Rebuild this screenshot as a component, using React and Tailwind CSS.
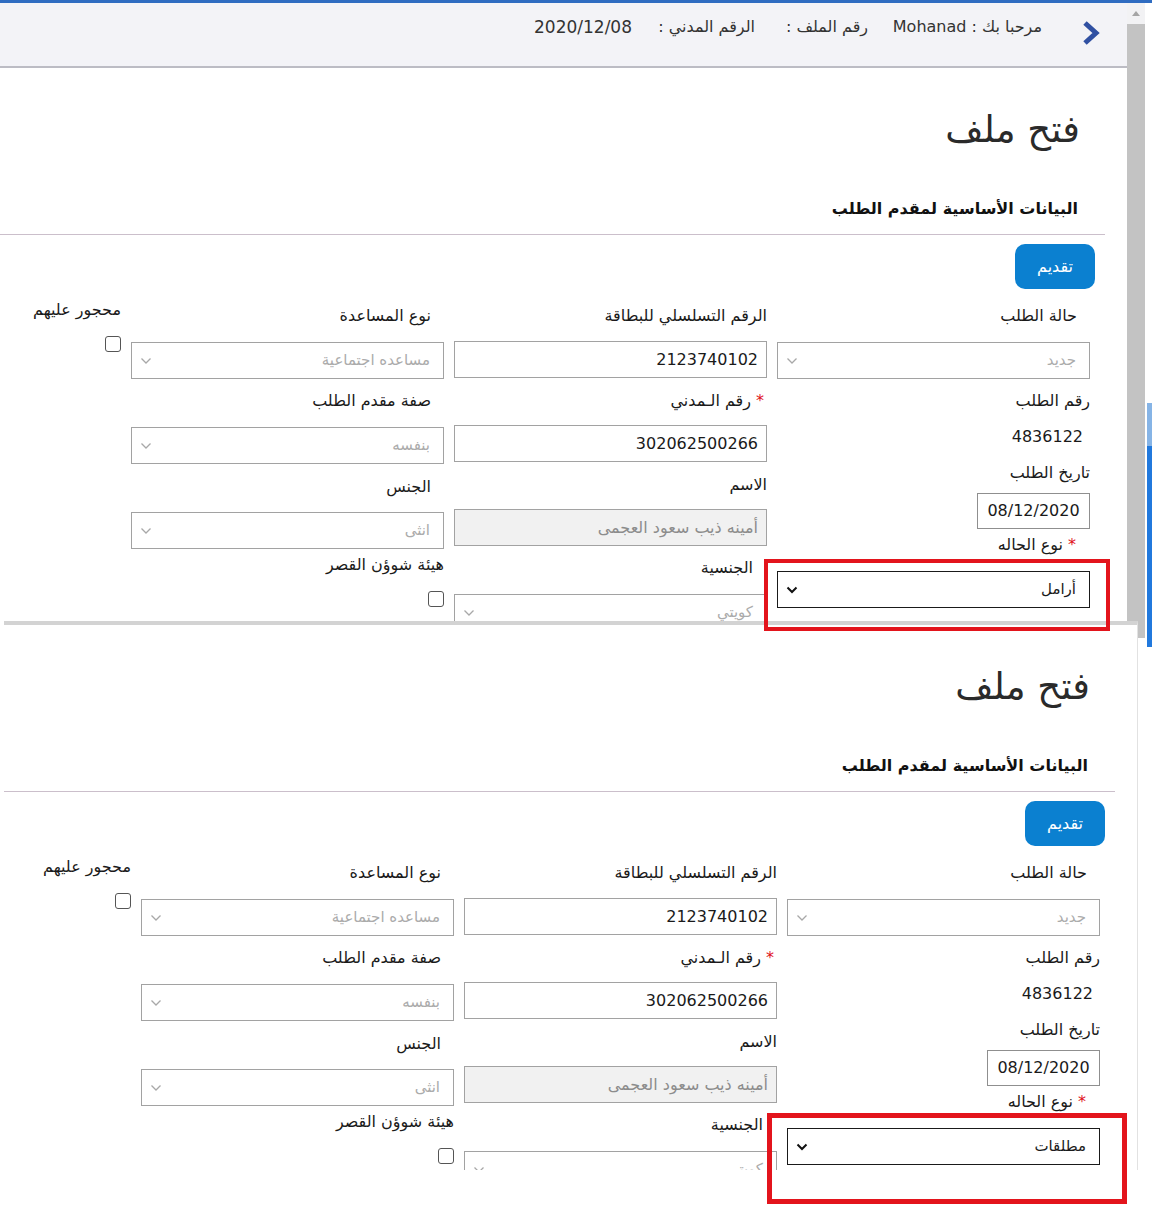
import React from "react";

function Chev({ dark }) {
  return (
    <svg width="12" height="8" viewBox="0 0 12 8" className="shrink-0">
      <path
        d="M1.5 1.5L6 6l4.5-4.5"
        fill="none"
        stroke={dark ? "#111" : "#a8a8a8"}
        strokeWidth={dark ? 2 : 1.3}
      />
    </svg>
  );
}

function Label({ children, cls = "", req }) {
  return (
    <div className={"h-[24px] leading-[24px] text-[16px] text-[#1a1a1a] whitespace-nowrap " + cls}>
      {req && <span className="text-[#e0101a] ml-[5px]">*</span>}
      {children}
    </div>
  );
}

function Select({ value, dark, cls = "" }) {
  return (
    <div
      className={
        "flex h-[37px] w-full items-center justify-between bg-white pr-[13px] pl-[8px] border " +
        (dark ? "border-[#1a1a1a] " : "border-[#a2a2a2] ") +
        cls
      }
    >
      <span className={"text-[15px] whitespace-nowrap " + (dark ? "text-[#1a1a1a]" : "text-[#ababab]")}>{value}</span>
      <Chev dark={dark} />
    </div>
  );
}

function Input({ value, disabled, cls = "" }) {
  return (
    <div
      className={
        "flex h-[37px] w-full items-center border border-[#a2a2a2] pr-[8px] whitespace-nowrap " +
        (disabled ? "bg-[#f1f1f1] text-[#8c8c8c] text-[16px] " : "bg-white text-[#1a1a1a] text-[16px] ") +
        cls
      }
    >
      {value}
    </div>
  );
}

function Check({ cls = "" }) {
  return <div className={"h-[16px] w-[16px] rounded-[3px] border border-[#555] bg-white " + cls} />;
}

function Content({ status }) {
  return (
    <div className="flex flex-col bg-white" dir="rtl">
      <div className="mt-[40px] h-[44px] pr-[47px] text-[37px] leading-[44px] text-[#2a2a2a]">فتح ملف</div>
      <div className="mt-[45px] h-[24px] pr-[49px] text-[16px] font-bold leading-[24px] text-[#111]">
        البيانات الأساسية لمقدم الطلب
      </div>
      <div className="mt-[13px] mr-[22px] h-px bg-[#cbbfcb]" />
      <div className="mt-[9px] pr-[32px]">
        <div className="flex h-[45px] w-[80px] items-center justify-center rounded-[10px] bg-[#0b80d0] text-[16px] text-white">
          تقديم
        </div>
      </div>
      <div className="mt-[7px] flex items-start gap-[10px] pr-[37px]">
        {/* column 1 */}
        <div className="flex w-[313px] flex-col items-start">
          <Label cls="mt-[8px] pr-[13px]">حالة الطلب</Label>
          <Select value="جديد" cls="mt-[14px]" />
          <Label cls="mt-[10px]">رقم الطلب</Label>
          <div className="mt-[12px] h-[24px] pr-[7px] text-[16px] leading-[24px] text-[#1a1a1a]">4836122</div>
          <Label cls="mt-[12px]">تاريخ الطلب</Label>
          <div className="mt-[8px] flex h-[36px] w-[113px] items-center justify-center border border-[#8f8f8f] bg-white text-[16px] text-[#1a1a1a]">
            08/12/2020
          </div>
          <Label cls="mt-[4px] pr-[14px]" req>نوع الحاله</Label>
          <Select value={status} dark cls="mt-[14px]" />
        </div>
        {/* column 2 */}
        <div className="flex w-[313px] flex-col items-start">
          <Label cls="mt-[8px]">الرقم التسلسلي للبطاقة</Label>
          <Input value="2123740102" cls="mt-[13px]" />
          <Label cls="mt-[11px] pr-[3px]" req>رقم الـمدني</Label>
          <Input value="302062500266" cls="mt-[12px]" />
          <Label cls="mt-[11px]">الاسم</Label>
          <Input value="أمينه ذيب سعود العجمى" disabled cls="mt-[12px]" />
          <Label cls="mt-[10px] pr-[14px]">الجنسية</Label>
          <Select value="كويتي" cls="mt-[14px]" />
        </div>
        {/* column 3 */}
        <div className="flex w-[313px] flex-col items-start">
          <Label cls="mt-[8px] pr-[13px]">نوع المساعدة</Label>
          <Select value="مساعده اجتماعية" cls="mt-[14px]" />
          <Label cls="mt-[10px] pr-[13px]">صفة مقدم الطلب</Label>
          <Select value="بنفسه" cls="mt-[14px]" />
          <Label cls="mt-[11px] pr-[13px]">الجنس</Label>
          <Select value="انثى" cls="mt-[13px]" />
          <Label cls="mt-[4px]">هيئة شوؤن القصر</Label>
          <Check cls="mt-[14px]" />
        </div>
        {/* column 4 */}
        <div className="flex w-[121px] flex-col items-start">
          <Label cls="mt-[2px]">محجور عليهم</Label>
          <Check cls="mt-[14px]" />
        </div>
      </div>
    </div>
  );
}

export default function App() {
  return (
    <div className="relative h-[1208px] w-[1152px] overflow-hidden bg-white font-['DejaVu_Sans',sans-serif]">
      <div className="h-[3px] bg-[#2f6cc1]" />
      {/* panel 1 */}
      <div className="flex h-[635px]">
        <div className="flex w-[1127px] flex-col overflow-hidden">
          <div className="h-[65px] shrink-0 border-b-2 border-[#bcbcc4] bg-[#f3f3f7]" dir="rtl">
            <div className="flex items-start pr-[27px] pt-[17px]">
              <svg width="18" height="26" viewBox="0 0 18 26" className="shrink-0">
                <path d="M3 3l11 10L3 23" fill="none" stroke="#3050a2" strokeWidth="5" />
              </svg>
            </div>
          </div>
          <Content status="أرامل" />
        </div>
        <div className="flex w-[18px] flex-col bg-[#c3c3c3]">
          <div className="flex h-[21px] items-center justify-center bg-[#f2f2f4]">
            <svg width="8" height="5" viewBox="0 0 8 5">
              <path d="M0 5L4 0l4 5z" fill="#a5a5a5" />
            </svg>
          </div>
        </div>
        <div className="w-[7px] bg-white" />
      </div>
      {/* header texts (overlay on header bar) */}
      <div className="absolute left-[0px] top-[15px] flex w-[1127px] items-center text-[16px] leading-[24px] text-[#333]" dir="rtl">
        <div className="w-[85px]" />
        <div className="w-[148px] whitespace-nowrap">مرحبا بك : Mohanad</div>
        <div className="w-[26px]" />
        <div className="w-[80px] whitespace-nowrap">رقم الملف :</div>
        <div className="w-[33px]" />
        <div className="w-[93px] whitespace-nowrap">الرقم المدني :</div>
        <div className="w-[30px]" />
        <div className="w-[97px] whitespace-nowrap text-[17px]">2020/12/08</div>
      </div>
      {/* panel 2 */}
      <div className="relative -mt-[17px] ml-[4px] h-[549px] w-[1134px] overflow-hidden border-t-4 border-r border-t-[#d3d3d3] border-r-[#e2e2e2] bg-white">
        <Content status="مطلقات" />
      </div>
      {/* annotation boxes */}
      <div className="absolute left-[764px] top-[559px] h-[72px] w-[346px] border-4 border-[#e3141c]" />
      <div className="absolute left-[767px] top-[1113px] h-[91px] w-[360px] border-[5px] border-[#e3141c]" />
      {/* background window strip */}
      <div className="absolute left-[1147px] top-[403px] flex h-[244px] w-[5px] flex-col">
        <div className="h-[43px] bg-[#86b4e6]" />
        <div className="flex-1 bg-[#2179dd]" />
      </div>
    </div>
  );
}
